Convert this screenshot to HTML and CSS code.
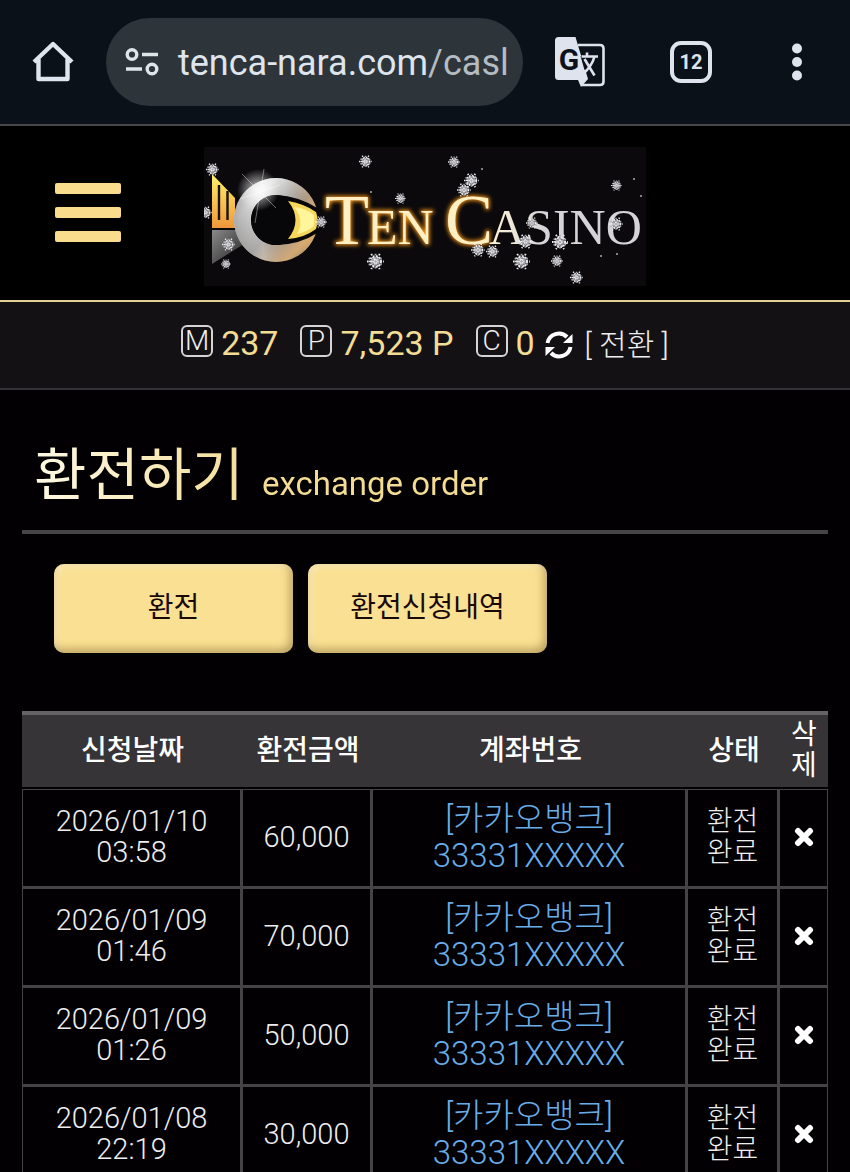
FILE: index.html
```html
<!DOCTYPE html>
<html lang="ko">
<head>
  <meta charset="UTF-8" />
  <meta name="viewport" content="width=device-width, initial-scale=1" />
  <title>환전하기</title>
  <link rel="stylesheet" href="styles.css">
</head>
<body>

  <!-- Browser bar -->
  <div class="browser-bar">
    <button class="icon-btn" aria-label="Home">
      <svg width="42" height="42" viewBox="0 0 42 42" fill="none" stroke="#dfe5ee" stroke-width="4.4" stroke-linejoin="round">
        <path d="M2 21 L21 3 L40 21 M6.500 18 V38 H35.500 V18" />
      </svg>
    </button>
    <button class="url-box">
      <svg width="36" height="30" viewBox="0 0 36 30" fill="none" stroke="#dfe5e8" stroke-width="3.400">
        <circle cx="8" cy="7.500" r="4.800" />
        <path d="M18 7.500 H34 M2 22 H18" />
        <circle cx="28" cy="22" r="4.800" />
      </svg>
      <span class="url">tenca-nara.com<span class="url-path">/casl</span></span>
    </button>
    <div class="bar-actions">
      <button class="icon-btn" aria-label="Translate">
        <svg width="50" height="50" viewBox="0 0 50 50">
          <path d="M23 8 H45 Q48.500 8 48.500 11.500 V44.500 Q48.500 48 45 48 H27" fill="none" stroke="#dfe3ee" stroke-width="2.600" />
          <path d="M3.500 0 H20.500 L33 42 L26 50 L23 43 H3.500 Q0 43 0 39.500 V3.500 Q0 0 3.500 0 Z" fill="#dfe3ee" />
          <path d="M25.500 19 L29.500 33 L35 27 L31 19 Z" fill="#0d121b" />
          <path d="M26.500 19.500 H43 M32 15.500 V19.500 M39.500 19.500 Q37 29 28 37 M29.500 22 L39.500 38.500" fill="none" stroke="#dfe3ee" stroke-width="2.600" />
          <text class="g-mark" x="14" y="33" text-anchor="middle">G</text>
        </svg>
      </button>
      <button class="icon-btn" aria-label="Tabs"><span class="tab-count">12</span></button>
      <button class="icon-btn more" aria-label="Menu">
        <svg width="12" height="38" viewBox="0 0 12 38" fill="#dfe3ee">
          <circle cx="6" cy="5.500" r="5" />
          <circle cx="6" cy="19" r="5" />
          <circle cx="6" cy="32.500" r="5" />
        </svg>
      </button>
    </div>
  </div>

  <!-- Site header -->
  <header class="site-header">
    <button class="menu-btn" aria-label="메뉴">
      <span></span><span></span><span></span>
    </button>
    <a href="#" class="logo" aria-label="Ten Casino">
      <svg width="442" height="139" viewBox="0 0 442 139">
        <defs>
          <linearGradient id="ring" x1="0" y1="0" x2="1" y2="1">
            <stop offset="0" stop-color="#e8e8e8" />
            <stop offset=".25" stop-color="#fff" />
            <stop offset=".55" stop-color="#9b9896" />
            <stop offset=".8" stop-color="#e8b578" />
            <stop offset="1" stop-color="#64615f" />
          </linearGradient>
          <linearGradient id="ring-side" x1="0" y1="0" x2="1" y2="0">
            <stop offset="0" stop-color="#777" />
            <stop offset=".35" stop-color="#d5d5d5" stop-opacity=".7" />
            <stop offset=".6" stop-color="#777" stop-opacity=".3" />
            <stop offset="1" stop-color="#f6b45a" stop-opacity=".9" />
          </linearGradient>
          <linearGradient id="gold" x1="0" y1="0" x2="0" y2="1">
            <stop offset="0" stop-color="#fff36a" />
            <stop offset="1" stop-color="#f0963a" />
          </linearGradient>
          <linearGradient id="grey" x1="0" y1="0" x2="1" y2="1">
            <stop offset="0" stop-color="#8a8a8a" />
            <stop offset="1" stop-color="#222" />
          </linearGradient>
          <linearGradient id="silver" gradientUnits="userSpaceOnUse" x1="285" y1="0" x2="340" y2="0">
            <stop offset="0" stop-color="#fff3d6" />
            <stop offset="1" stop-color="#d4d4d8" />
          </linearGradient>
          <radialGradient id="shine">
            <stop offset="0" stop-color="#fff" stop-opacity=".8" />
            <stop offset="1" stop-color="#fff" stop-opacity="0" />
          </radialGradient>
          <filter id="glow" x="-20%" y="-20%" width="140%" height="140%">
            <feGaussianBlur stdDeviation="2.200" />
          </filter>
          <symbol id="flake" viewBox="-10 -10 20 20" overflow="visible">
            <circle r="6" fill="#77777c" />
            <g fill="none" stroke="#ececf0" stroke-width="2.200" stroke-dasharray="2 1.800">
              <path d="M-10 0 H10 M-5 -9 L5 9 M5 -9 L-5 9" />
              <circle r="6.500" />
              <circle r="3" />
              <path d="M-8 -4 L8 4 M-8 4 L8 -4 M0 -9 V9" stroke="#a8a8ae" />
            </g>
          </symbol>
        </defs>
        <rect width="442" height="139" fill="#0b090c" />

        <path d="M8 27 L31 51 V81 H8 Z" fill="url(#gold)" />
        <path d="M15 38 V73 M23.500 44 V73" stroke="#1a1208" stroke-width="2.400" />
        <path d="M8 83 H32 L40 97 L8 117 Z" fill="url(#grey)" />

        <path fill-rule="evenodd" d="M72 31 A42 42 0 1 0 72.010 31 Z M72 48 A25 25 0 1 1 71.990 48 Z" fill="url(#ring)" />
        <path fill-rule="evenodd" d="M72 31 A42 42 0 1 0 72.010 31 Z M72 48 A25 25 0 1 1 71.990 48 Z" fill="url(#ring-side)" opacity=".6" />
        <path d="M72 48 Q95 49 115 62 V85 Q95 98 72 98 A25 25 0 0 1 72 48 Z" fill="#070608" />
        <path d="M84 54 Q101 57 112 65 Q115 73 112 82 Q100 91 84 92 Q99 73 84 54 Z" fill="#f7d65c" />
        <path d="M90 60 Q102 61 110 68 V79 Q103 85 93 87 Q101 73 90 60 Z" fill="#fff59a" />
        <circle cx="54" cy="43" r="21" fill="url(#shine)" />
        <path d="M38 27 L72 61 M60 22 L51 76 M36 52 L76 38" stroke="#fff" stroke-width="1" opacity=".4" />

        <g class="logo-text logo-glow" filter="url(#glow)">
          <text class="cap" x="121" y="97">T</text>
          <text class="small" x="163" y="97">EN</text>
          <text class="cap" x="241" y="97">C</text>
        </g>
        <g class="logo-text logo-gold">
          <text class="cap" x="121" y="97">T</text>
          <text class="small" x="163" y="97">EN</text>
          <text class="cap" x="241" y="97">C</text>
        </g>
        <text class="logo-text small" x="285" y="97" fill="url(#silver)">ASINO</text>

        <use href="#flake" x="2" y="16" width="13" height="13" />
        <use href="#flake" x="-5" y="59" width="13" height="13" />
        <use href="#flake" x="18" y="91" width="13" height="13" />
        <use href="#flake" x="17" y="112" width="10" height="10" />
        <use href="#flake" x="155" y="8" width="13" height="13" />
        <use href="#flake" x="111" y="69" width="12" height="12" />
        <use href="#flake" x="191" y="46" width="11" height="11" />
        <use href="#flake" x="163" y="106" width="17" height="17" />
        <use href="#flake" x="244" y="9" width="12" height="12" />
        <use href="#flake" x="260" y="26" width="15" height="15" />
        <use href="#flake" x="253" y="36" width="14" height="14" />
        <use href="#flake" x="267" y="96" width="14" height="14" />
        <use href="#flake" x="282" y="98" width="13" height="13" />
        <use href="#flake" x="314" y="87" width="15" height="15" />
        <use href="#flake" x="322" y="70" width="12" height="12" />
        <use href="#flake" x="348" y="87" width="16" height="16" />
        <use href="#flake" x="309" y="106" width="17" height="17" />
        <use href="#flake" x="347" y="108" width="12" height="12" />
        <use href="#flake" x="366" y="124" width="13" height="13" />
        <use href="#flake" x="407" y="33" width="11" height="11" />
        <use href="#flake" x="405" y="70" width="14" height="14" />
        <g fill="#aaa">
          <circle cx="278" cy="22" r="1" /><circle cx="430" cy="32" r="1" />
          <circle cx="437" cy="49" r="1" /><circle cx="413" cy="107" r="1" />
          <circle cx="397" cy="109" r="1" /><circle cx="167" cy="45" r="1" />
        </g>
      </svg>
    </a>
  </header>

  <!-- Balance -->
  <div class="balance">
    <span class="coin">M</span><span class="amount">237</span>
    <span class="coin">P</span><span class="amount">7,523 P</span>
    <span class="coin">C</span><span class="amount last">0</span>
    <button class="refresh" aria-label="새로고침">
      <svg width="28" height="28" viewBox="0 0 28 28">
        <path d="M2.500 12 A11.500 11.500 0 0 1 22 6 M25.500 16 A11.500 11.500 0 0 1 6 22" fill="none" stroke="#fff" stroke-width="4" />
        <path d="M27.500 3 V12 H18 Z M0.500 25 V16 H10 Z" fill="#fff" />
      </svg>
    </button>
    <a href="#" class="convert">[ 전환 ]</a>
  </div>

  <main class="content">
    <h1 class="page-title">환전하기 <small>exchange order</small></h1>

    <div class="tabs">
      <button class="btn">환전</button>
      <button class="btn">환전신청내역</button>
    </div>

    <table class="orders">
      <colgroup>
        <col class="col-date"><col class="col-amount"><col><col class="col-status"><col class="col-delete">
      </colgroup>
      <thead>
        <tr>
          <th>신청날짜</th>
          <th>환전금액</th>
          <th>계좌번호</th>
          <th>상태</th>
          <th>삭<br>제</th>
        </tr>
      </thead>
      <tbody id="order-rows"></tbody>
    </table>
  </main>

  <script>
    const orders = [
      { date: "2026/01/10", time: "03:58", amount: 60000 },
      { date: "2026/01/09", time: "01:46", amount: 70000 },
      { date: "2026/01/09", time: "01:26", amount: 50000 },
      { date: "2026/01/08", time: "22:19", amount: 30000 }
    ];

    document.getElementById('order-rows').innerHTML = orders.map(o => `
      <tr>
        <td class="num">${o.date}<br>${o.time}</td>
        <td class="num">${o.amount.toLocaleString('en-US')}</td>
        <td class="account">[카카오뱅크]<br>33331XXXXX</td>
        <td>환전<br>완료</td>
        <td class="delete">
          <button aria-label="삭제">
            <svg width="20" height="20" viewBox="0 0 20 20">
              <path d="M4 4 L16 16 M16 4 L4 16" stroke="#fff" stroke-width="6" stroke-linecap="round" />
            </svg>
          </button>
        </td>
      </tr>`).join('');
  </script>
</body>
</html>
```
FILE: styles.css
```css
* {
  box-sizing: border-box;
}

body {
  margin: 0;
  height: 100vh;
  overflow: hidden;
  background: #020003;
  color: #eee;
  font-family: Roboto, "Noto Sans CJK KR", sans-serif;
  font-size: 28px;
}

button {
  padding: 0;
  border: none;
  background: none;
  color: inherit;
  font: inherit;
  cursor: pointer;
}

a {
  color: inherit;
  text-decoration: none;
}

svg {
  display: block;
}

/* browser bar */
.browser-bar {
  display: flex;
  align-items: center;
  gap: 32px;
  height: 126px;
  padding: 0 33px 0 32px;
  background: #0b1118;
  border-bottom: 2px solid #47464a;
}

.url-box {
  display: flex;
  flex: 1;
  align-items: center;
  gap: 18px;
  min-width: 0;
  height: 88px;
  padding: 0 8px 0 18px;
  border-radius: 44px;
  background: #2d343a;
}

.url-box svg {
  flex: none;
}

.url {
  padding-top: 2px;
  font-size: 36px;
  line-height: 48px;
  white-space: nowrap;
  color: #dfe5ec;
}

.url-path {
  color: #b4bcc2;
}

.bar-actions {
  display: flex;
  align-items: center;
  gap: 65px;
}

.g-mark {
  font-family: Roboto, sans-serif;
  font-size: 30px;
  font-weight: 700;
  fill: #0d121b;
}

.tab-count {
  display: block;
  width: 42px;
  height: 42px;
  border: 4px solid #dfe3ee;
  border-radius: 11px;
  font-size: 20px;
  font-weight: 700;
  line-height: 34px;
  text-align: center;
  color: #dfe3ee;
}

.more {
  width: 40px;
}

.more svg {
  margin: 0 auto;
}

/* header */
.site-header {
  display: grid;
  grid-template-columns: 1fr auto 1fr;
  align-items: center;
  height: 176px;
  padding-bottom: 2px;
  background: #000;
  border-bottom: 2px solid #e5d194;
}

.menu-btn {
  display: flex;
  flex-direction: column;
  gap: 13px;
  width: 66px;
  margin-left: 55px;
}

.menu-btn span {
  height: 11px;
  border-radius: 2px;
  background: #f9dd8c;
}

.logo {
  margin-top: 8px;
}

.logo-text {
  font-family: "Liberation Serif", serif;
}

.logo-text .cap {
  font-size: 72px;
}

.logo-text .small,
.logo-text.small {
  font-size: 50px;
}

.logo-glow {
  fill: #ff9d1c;
  stroke: #ff9d1c;
  stroke-width: 2px;
}

.logo-gold {
  fill: #fff0c4;
}

/* balance */
.balance {
  display: flex;
  align-items: center;
  justify-content: center;
  height: 88px;
  padding-bottom: 4px;
  background: #131114;
  border-bottom: 2px solid #333135;
}

.coin {
  width: 32px;
  height: 32px;
  margin: 0 8px 4px 0;
  border: 2px solid #d5d3d5;
  border-radius: 6px;
  font-size: 28px;
  font-weight: 300;
  line-height: 28px;
  text-align: center;
}

.amount {
  margin-right: 22px;
  font-size: 34px;
  line-height: 40px;
  color: #f3dc93;
}

.amount.last {
  margin-right: 10px;
}

.refresh {
  margin: 4px 12px 0 0;
}

.convert {
  font-size: 30px;
  font-weight: 300;
  line-height: 40px;
  padding-top: 4px;
}

/* content */
.content {
  padding: 0 22px;
}

.page-title {
  margin: 0 0 30px;
  padding: 48px 12px 8px;
  border-bottom: 4px solid #464447;
  font-size: 57px;
  font-weight: 400;
  line-height: 76px;
  color: transparent;
  background: linear-gradient(90deg, #fffbe8 0, #f3dc93 240px, #f3dc93 100%);
  -webkit-background-clip: text;
  background-clip: text;
}

.page-title small {
  margin-left: 4px;
  font-size: 33px;
}

.tabs {
  display: flex;
  gap: 15px;
  padding: 0 32px;
  margin-bottom: 58px;
}

.btn {
  width: 239px;
  height: 89px;
  padding-bottom: 8px;
  border-radius: 10px;
  background: #f9e092;
  color: #180808;
  box-shadow: inset -3px -4px 8px rgba(100, 70, 20, 0.4), inset 3px 3px 6px rgba(255, 240, 210, 0.6);
}

/* table */
.orders {
  width: 100%;
  table-layout: fixed;
  border-collapse: separate;
  border-spacing: 0;
  line-height: 31px;
  text-align: center;
}

.col-date {
  width: 221px;
}

.col-amount {
  width: 130px;
}

.col-status {
  width: 92px;
}

.col-delete {
  width: 48px;
}

.orders th {
  height: 78px;
  padding: 0 0 2px;
  background: #373438;
  border-top: 4px solid #656366;
  border-bottom: 2px solid #020003;
  color: #fff;
  font-weight: 500;
}

.orders th:last-child {
  font-weight: 400;
}

.orders td {
  height: 99px;
  padding: 0 0 2px;
  border-right: 3px solid #464347;
  border-bottom: 3px solid #464347;
  font-weight: 300;
}

.orders td:first-child {
  border-left: 1px solid #464347;
}

.orders td:last-child {
  border-right-width: 1px;
}

.orders tbody tr:first-child td {
  height: 100px;
  border-top: 1px solid #464347;
}

.orders .num {
  font-size: 29px;
}

.orders .account {
  color: #68ade8;
  font-size: 33px;
  line-height: 37px;
}

.delete svg {
  margin: 4px auto 0;
}
```
